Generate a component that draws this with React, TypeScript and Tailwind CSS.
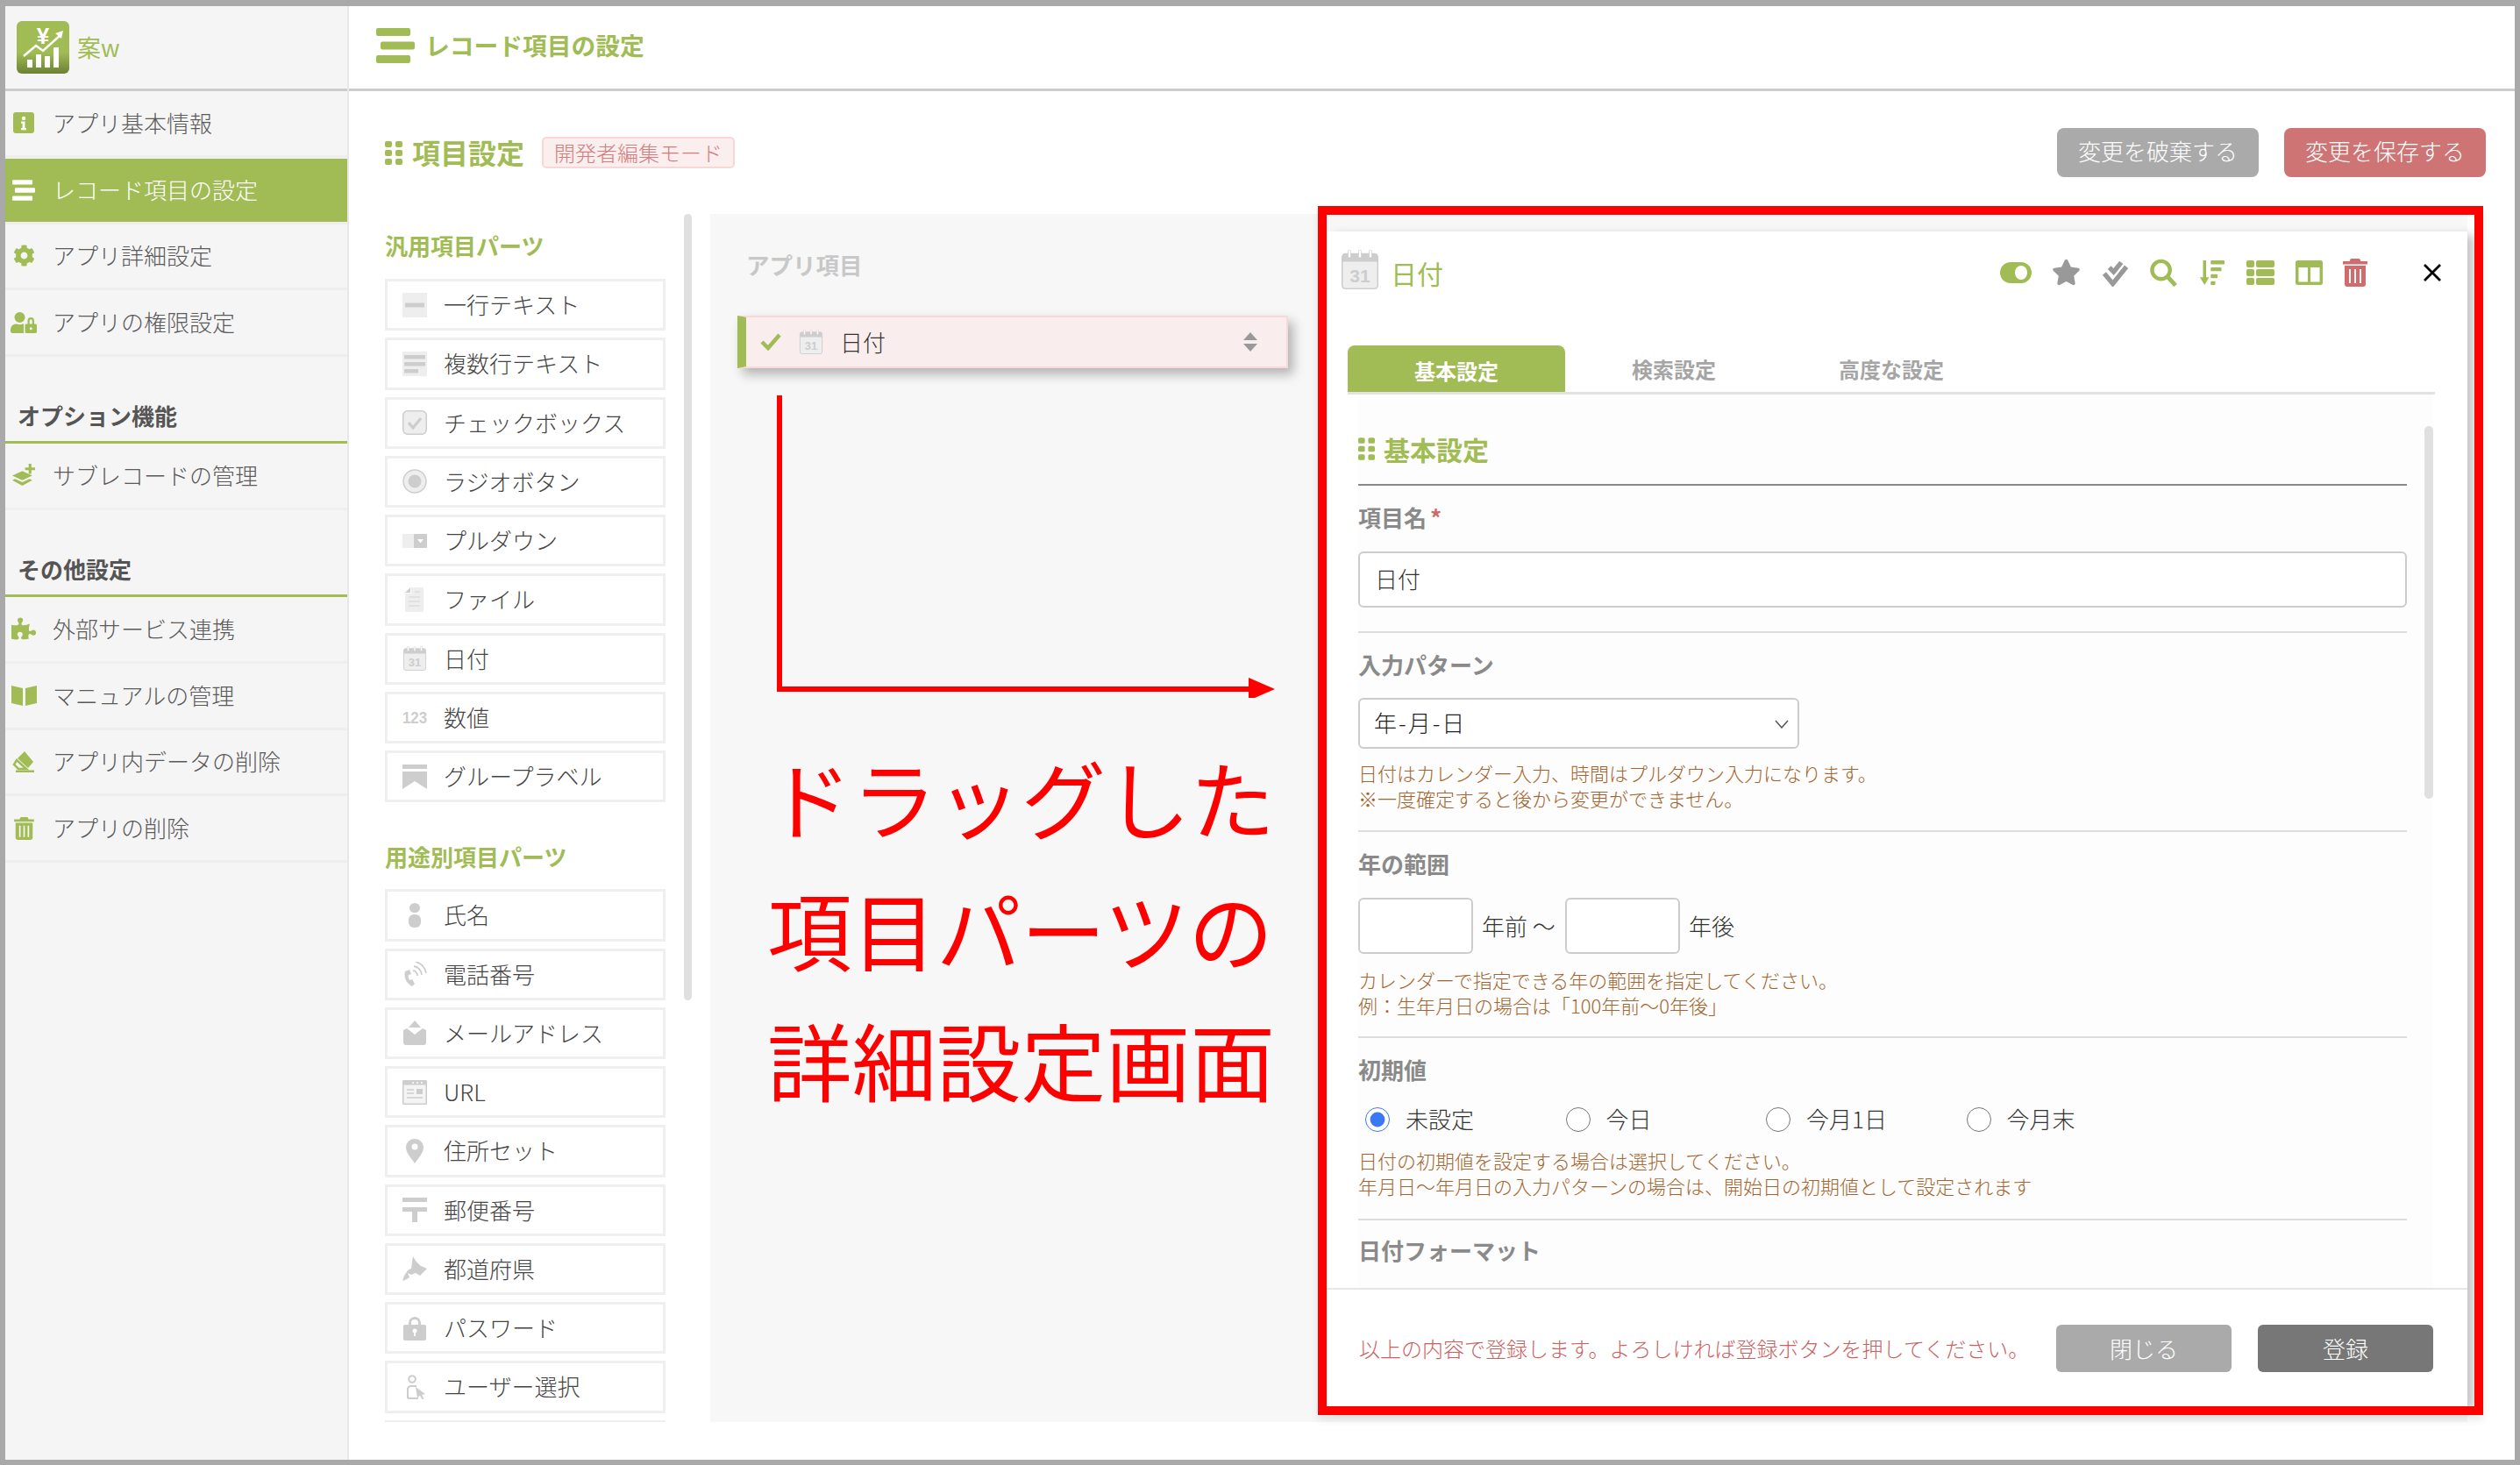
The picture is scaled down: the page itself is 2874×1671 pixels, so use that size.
import type { ReactNode } from 'react';
import { FaCog, FaPuzzlePiece, FaStar, FaUserLock } from 'react-icons/fa';

const GREEN = '#a1bc55';
const GRAY = '#cdcdcd';
const PALE = '#eeeeee';

function MenuIcon({ color = GREEN, className = '' }: { color?: string; className?: string }) {
  return (
    <svg viewBox="0 0 44 40" className={className} fill={color}>
      <rect x="0" y="0" width="39" height="9" rx="2" />
      <rect x="5" y="15.5" width="39" height="9" rx="2" />
      <rect x="0" y="31" width="39" height="9" rx="2" />
    </svg>
  );
}

function DotsIcon({ className = '' }: { className?: string }) {
  return (
    <svg viewBox="0 0 20 27" className={className} fill={GREEN}>
      <rect x="0" y="0" width="8" height="7" rx="2" />
      <rect x="12" y="0" width="8" height="7" rx="2" />
      <rect x="0" y="10" width="8" height="7" rx="2" />
      <rect x="12" y="10" width="8" height="7" rx="2" />
      <rect x="0" y="20" width="8" height="7" rx="2" />
      <rect x="12" y="20" width="8" height="7" rx="2" />
    </svg>
  );
}

function CalendarIcon({ className = '' }: { className?: string }) {
  return (
    <svg viewBox="0 0 28 30" className={className}>
      <rect x="0.5" y="3" width="27" height="26.5" rx="2.5" fill={PALE} stroke={GRAY} />
      <path d="M0.5 5.5a2.5 2.5 0 0 1 2.5-2.5h22a2.5 2.5 0 0 1 2.5 2.5V9H0.5z" fill={GRAY} />
      <rect x="5" y="0" width="2" height="6" rx="1" fill="#ffffff" stroke={GRAY} strokeWidth="0.5" />
      <rect x="13" y="0" width="2" height="6" rx="1" fill="#ffffff" stroke={GRAY} strokeWidth="0.5" />
      <rect x="21" y="0" width="2" height="6" rx="1" fill="#ffffff" stroke={GRAY} strokeWidth="0.5" />
      <text x="14" y="24.5" textAnchor="middle" fontSize="14" fontWeight="700" fill={GRAY} fontFamily="Liberation Sans, sans-serif">
        31
      </text>
    </svg>
  );
}

function TrashIcon({ color = GREEN, className = '' }: { color?: string; className?: string }) {
  return (
    <svg viewBox="0 0 28 32" className={className} fill={color}>
      <path d="M10 0h8a2 2 0 0 1 2 2v1h8v3.5H0V3h8V2a2 2 0 0 1 2-2z" />
      <path d="M2 8h24v21a3 3 0 0 1-3 3H5a3 3 0 0 1-3-3z" />
      <rect x="7" y="12" width="2" height="16" fill="#ffffff" />
      <rect x="13" y="12" width="2" height="16" fill="#ffffff" />
      <rect x="19" y="12" width="2" height="16" fill="#ffffff" />
    </svg>
  );
}

function InfoIcon() {
  return (
    <svg viewBox="0 0 24 24" className="h-[24px] w-[24px]">
      <rect width="24" height="24" rx="3" fill={GREEN} />
      <circle cx="12" cy="7" r="2.2" fill="#ffffff" />
      <path d="M9 10.5h4.5V18H15v2.2H9V18h1.6v-5.3H9z" fill="#ffffff" />
    </svg>
  );
}

function SubRecordIcon() {
  return (
    <svg viewBox="0 0 26 26" className="h-[27px] w-[27px]" fill={GREEN}>
      <path d="M18 0h3v4h4v3h-4v4h-3V7h-4V4h4z" />
      <path d="M0 13l11-5 11 5-11 5z" />
      <path d="M0 18l3-1.500 8 3.700 8-3.700 3 1.500-11 6z" />
    </svg>
  );
}

function BookIcon() {
  return (
    <svg viewBox="0 0 29 24" className="h-[24px] w-[29px]" fill={GREEN}>
      <path d="M0 1l13 3v20L0 21z" />
      <path d="M29 1l-13 3v20l13-3z" />
    </svg>
  );
}

function EraserIcon() {
  return (
    <svg viewBox="0 0 26 24" className="h-[24px] w-[26px]" fill={GREEN}>
      <path d="M14 0l10 12-6 7-12-11z" />
      <path d="M5 10l11 10H7l-5-5z" fill="none" stroke={GREEN} strokeWidth="2.500" />
      <rect x="4" y="21.500" width="21" height="2.500" />
    </svg>
  );
}

const fullBox = 'h-[28px] w-[28px]';

function PartIcon({ kind }: { kind: string }) {
  switch (kind) {
    case 'line':
      return (
        <svg viewBox="0 0 28 28" className={fullBox}>
          <rect width="28" height="28" fill={PALE} />
          <rect x="3" y="11.5" width="22" height="5" fill={GRAY} />
        </svg>
      );
    case 'multi':
      return (
        <svg viewBox="0 0 28 28" className={fullBox}>
          <rect width="28" height="28" fill={PALE} />
          <rect x="2" y="4" width="24" height="4.5" fill={GRAY} />
          <rect x="2" y="12" width="24" height="4.5" fill={GRAY} />
          <rect x="2" y="20" width="16" height="4.5" fill={GRAY} />
        </svg>
      );
    case 'check':
      return (
        <svg viewBox="0 0 28 28" className={fullBox}>
          <rect x="0.75" y="0.75" width="26.5" height="26.5" rx="5" fill={PALE} stroke={GRAY} strokeWidth="1.5" />
          <path d="M7 14l5 6 9-11" fill="none" stroke={GRAY} strokeWidth="3.2" />
        </svg>
      );
    case 'radio':
      return (
        <svg viewBox="0 0 28 28" className={fullBox}>
          <circle cx="14" cy="14" r="13" fill={PALE} stroke={GRAY} strokeWidth="1.5" />
          <circle cx="14" cy="14" r="7.5" fill={GRAY} />
        </svg>
      );
    case 'select':
      return (
        <svg viewBox="0 0 28 28" className={fullBox}>
          <rect x="0" y="6" width="28" height="16" fill={PALE} />
          <rect x="13" y="6" width="15" height="16" fill={GRAY} />
          <path d="M17 12h7l-3.500 4.500z" fill="#ffffff" />
        </svg>
      );
    case 'file':
      return (
        <svg viewBox="0 0 28 28" className={fullBox}>
          <path d="M10 0h14v28H3V7h7z" fill={PALE} />
          <path d="M9 0v6H3z" fill={GRAY} />
          <path d="M7 11h13M7 16h13M7 21h13M14 5h6" stroke="#dddddd" strokeWidth="1.5" />
        </svg>
      );
    case 'date':
      return <CalendarIcon className={fullBox} />;
    case 'number':
      return (
        <svg viewBox="0 0 28 28" className={`${fullBox} overflow-visible`}>
          <text x="14" y="21" textAnchor="middle" fontSize="19" textLength="28" lengthAdjust="spacingAndGlyphs" fontWeight="700" fill={GRAY} fontFamily="Liberation Sans, sans-serif">
            123
          </text>
        </svg>
      );
    case 'group':
      return (
        <svg viewBox="0 0 28 28" className={fullBox} fill={GRAY}>
          <rect width="28" height="5" />
          <path d="M0 8h28v20l-14-9-14 9z" />
        </svg>
      );
    case 'person':
      return (
        <svg viewBox="0 0 28 28" className={fullBox} fill={GRAY}>
          <ellipse cx="14" cy="5.500" rx="6" ry="5.500" />
          <rect x="7" y="13" width="14" height="15" rx="6" />
        </svg>
      );
    case 'phone':
      return (
        <svg viewBox="0 0 28 28" className={fullBox}>
          <path d="M3 11c-2 7 2 14 8 17l3-3-3-5-3 1c-1-2-2-4-1-6l3-1-2-5z" fill={GRAY} />
          <path d="M12 10a6 6 0 0 1 5 6M13 5a11 11 0 0 1 9 10M15 0a16 16 0 0 1 12 13" fill="none" stroke={GRAY} strokeWidth="1.800" />
        </svg>
      );
    case 'mail':
      return (
        <svg viewBox="0 0 28 28" className={fullBox} fill={GRAY}>
          <path d="M14 0l7 8H7z" />
          <path d="M1 11l4-2 9 7 9-7 4 2v14a3 3 0 0 1-3 3H4a3 3 0 0 1-3-3z" />
        </svg>
      );
    case 'url':
      return (
        <svg viewBox="0 0 28 28" className={fullBox}>
          <rect width="28" height="28" rx="1.500" fill={GRAY} />
          <rect x="1.500" y="5.500" width="25" height="21" fill="#f4f4f4" />
          <circle cx="12" cy="3" r="1" fill="#ffffff" />
          <circle cx="17" cy="3" r="1" fill="#ffffff" />
          <circle cx="22" cy="3" r="1" fill="#ffffff" />
          <path d="M5 11h8M5 15h8M5 20h18" stroke={GRAY} strokeWidth="1.500" />
          <rect x="16" y="10" width="7" height="6" fill={GRAY} />
        </svg>
      );
    case 'pin':
      return (
        <svg viewBox="0 0 28 28" className={fullBox}>
          <path d="M14 0c6 0 10 4.500 10 10 0 6-6 12-10 18C10 22 4 16 4 10 4 4.500 8 0 14 0z" fill={GRAY} />
          <ellipse cx="14" cy="9" rx="3.500" ry="3.500" fill="#ffffff" />
        </svg>
      );
    case 'post':
      return (
        <svg viewBox="0 0 28 28" className={fullBox} fill={GRAY}>
          <rect width="28" height="5" />
          <rect y="11" width="28" height="5" />
          <rect x="11" y="11" width="6" height="17" />
        </svg>
      );
    case 'pref':
      return (
        <svg viewBox="0 0 28 28" className={fullBox} fill={GRAY}>
          <path d="M12 0c2 4 5 8 9 11l7 3-4 4-4 4-5-3-5 2-4-2 2 5-5 3-3 1 2-6 4-6 4-2 1-8z" />
        </svg>
      );
    case 'lock':
      return (
        <svg viewBox="0 0 28 28" className={fullBox}>
          <path d="M7 11V8a7 7 0 0 1 14 0v3h-3V8a4 4 0 0 0-8 0v3z" fill={GRAY} />
          <rect x="1" y="10" width="26" height="18" rx="2" fill={GRAY} />
          <circle cx="14" cy="17" r="2.500" fill="#ffffff" />
          <rect x="13" y="17" width="2" height="6" fill="#ffffff" />
        </svg>
      );
    case 'user':
      return (
        <svg viewBox="0 0 28 28" className={fullBox}>
          <circle cx="11" cy="5" r="3.800" fill="none" stroke={GRAY} strokeWidth="2" />
          <path d="M16 13h-7a4 4 0 0 0-3 4v9a1 1 0 0 0 1 1h11" fill="none" stroke={GRAY} strokeWidth="2" />
          <path d="M15 14l11 8-4 1 2.500 5-2 .5-2.500-5-3 3z" fill={GRAY} />
        </svg>
      );
    default:
      return <span className="block h-[28px] w-[28px]" />;
  }
}

function NavItem({ icon, label, active = false }: { icon: ReactNode; label: string; active?: boolean }) {
  return (
    <div
      className={`flex h-[75.75px] items-center border-b-[3px] border-[#eeeeee] ${
        active ? 'border-t-[1px] border-t-[#f6f5f6] bg-[#a1bc55] text-white' : 'text-[#5a5a5a]'
      }`}
    >
      <span className="flex w-[42px] shrink-0 justify-center">{icon}</span>
      <span className="ml-[12px] pb-[2px]">{label}</span>
    </div>
  );
}

function SideHeading({ label, h }: { label: string; h: string }) {
  return (
    <div className={`flex items-end border-b-[3px] border-[#a1bc55] pb-[11px] pl-[14px] font-bold leading-[36px] text-[#555555] ${h}`}>
      {label}
    </div>
  );
}

function Part({ kind, label }: { kind: string; label: string }) {
  return (
    <div className="mb-[8px] flex h-[59.25px] items-center border-[3px] border-[#efefef] bg-white pl-[17px] text-[#444444]">
      <PartIcon kind={kind} />
      <span className="ml-[19px] pb-[2px]">{label}</span>
    </div>
  );
}

function Field({ label, required = false, pb, children }: { label: string; required?: boolean; pb: string; children: ReactNode }) {
  return (
    <div className={`border-b-[2px] border-[#dddddd] pt-[18px] ${pb}`}>
      <div className="font-bold leading-[36px] text-[#8a8a8a]">
        {label}
        {required && <span className="ml-[4px] text-[#d06a6a]">*</span>}
      </div>
      {children}
    </div>
  );
}

function Help({ lines }: { lines: string[] }) {
  return (
    <div className="text-[22px] leading-[29px] text-[#a5642d]">
      {lines.map((l) => (
        <div key={l}>{l}</div>
      ))}
    </div>
  );
}

function Radio({ label, checked = false }: { label: string; checked?: boolean }) {
  return (
    <label className="flex h-[36px] w-[228.500px] items-center text-[#333333]">
      <input type="radio" name="initial" defaultChecked={checked} className="ml-[8px] h-[28px] w-[28px] accent-[#3b78f6]" />
      <span className="mb-[4px] ml-[18px]">{label}</span>
    </label>
  );
}

const generalParts = [
  ['line', '一行テキスト'],
  ['multi', '複数行テキスト'],
  ['check', 'チェックボックス'],
  ['radio', 'ラジオボタン'],
  ['select', 'プルダウン'],
  ['file', 'ファイル'],
  ['date', '日付'],
  ['number', '数値'],
  ['group', 'グループラベル'],
];

const usageParts = [
  ['person', '氏名'],
  ['phone', '電話番号'],
  ['mail', 'メールアドレス'],
  ['url', 'URL'],
  ['pin', '住所セット'],
  ['post', '郵便番号'],
  ['pref', '都道府県'],
  ['lock', 'パスワード'],
  ['user', 'ユーザー選択'],
  ['', ''],
];

export default function App() {
  return (
    <div className="relative h-[1671px] w-full overflow-hidden bg-[#a9a9a9] pb-[6px] pl-[6px] pr-[6px] pt-[7px] font-['Noto_Sans_CJK_JP','Noto_Sans',sans-serif] text-[26px] font-light">
      <div className="flex h-full bg-white">
        {/* sidebar */}
        <aside className="h-full w-[392px] shrink-0 border-r-[2px] border-[#e8e8e8] bg-[#f6f5f6]">
          <div className="flex h-[97px] items-center border-b-[3px] border-[#cccccc] pl-[13px]">
            <div className="h-[60px] w-[60px] overflow-hidden rounded-[6px] bg-gradient-to-b from-[#a1bc55] from-60% to-[#6b8232]">
              <svg viewBox="0 0 60 60">
                <text x="30" y="26" textAnchor="middle" fontSize="26" fontWeight="700" fill="#ffffff" fontFamily="Liberation Sans, sans-serif">
                  ¥
                </text>
                <path d="M8 40l14-12 8 6 20-18" fill="none" stroke="#ffffff" strokeWidth="2.500" />
                <path d="M44 14l9-3-2 9z" fill="#ffffff" />
                <rect x="12" y="44" width="6" height="9" fill="#ffffff" />
                <rect x="22" y="38" width="6" height="15" fill="#ffffff" />
                <rect x="32" y="40" width="6" height="13" fill="#ffffff" />
                <rect x="42" y="30" width="6" height="23" fill="#ffffff" />
              </svg>
            </div>
            <span className="ml-[9px] text-[27px] font-normal text-[#a1bc55]">案w</span>
          </div>
          <NavItem icon={<InfoIcon />} label="アプリ基本情報" />
          <NavItem active icon={<MenuIcon color="#ffffff" className="h-[24px] w-[26px]" />} label="レコード項目の設定" />
          <NavItem icon={<FaCog size={25} color={GREEN} />} label="アプリ詳細設定" />
          <NavItem icon={<FaUserLock size={30} color={GREEN} />} label="アプリの権限設定" />
          <SideHeading label="オプション機能" h="h-[99px]" />
          <NavItem icon={<SubRecordIcon />} label="サブレコードの管理" />
          <SideHeading label="その他設定" h="h-[99.250px]" />
          <NavItem icon={<FaPuzzlePiece size={28} color={GREEN} />} label="外部サービス連携" />
          <NavItem icon={<BookIcon />} label="マニュアルの管理" />
          <NavItem icon={<EraserIcon />} label="アプリ内データの削除" />
          <NavItem icon={<TrashIcon className="h-[26px] w-[23px]" />} label="アプリの削除" />
        </aside>

        {/* main */}
        <main className="min-w-0 flex-1">
          <header className="flex h-[97px] items-center border-b-[3px] border-[#cccccc] pb-[4px] pl-[31px]">
            <MenuIcon className="h-[40px] w-[44px]" />
            <span className="ml-[12px] text-[27.750px] font-bold text-[#a1bc55]">レコード項目の設定</span>
          </header>

          <div className="mb-[42px] mt-[42px] flex h-[56px] items-center pl-[41px] pr-[33px]">
            <DotsIcon className="h-[27px] w-[20px]" />
            <span className="mb-[2px] ml-[11px] text-[32px] font-bold text-[#a1bc55]">項目設定</span>
            <span className="ml-[20px] flex h-[36px] w-[220px] items-center justify-center rounded-[5px] border-[2px] border-[#f8d7d7] bg-[#fbeeee] pb-[1px] text-[24px] text-[#d27d7d]">
              開発者編集モード
            </span>
            <button type="button" className="ml-auto h-[56px] w-[230px] rounded-[8px] bg-[#aaaaaa] pb-[5px] text-white">
              変更を破棄する
            </button>
            <button type="button" className="ml-[29px] h-[56px] w-[230px] rounded-[8px] bg-[#ce7474] pb-[5px] text-white">
              変更を保存する
            </button>
          </div>

          <div className="flex h-[1378px] pl-[41px] pr-[54px]">
            {/* parts palette */}
            <div className="w-[320px] shrink-0 overflow-hidden">
              <div className="mb-[20px] mt-[18px] font-bold leading-[36px] text-[#a1bc55]">汎用項目パーツ</div>
              {generalParts.map(([k, l]) => (
                <Part key={l} kind={k} label={l} />
              ))}
              <div className="mb-[19px] mt-[44px] font-bold leading-[36px] text-[#a1bc55]">用途別項目パーツ</div>
              {usageParts.map(([k, l]) => (
                <Part key={l} kind={k} label={l} />
              ))}
            </div>
            <div className="ml-[21px] h-[897px] w-[9px] shrink-0 rounded-full bg-[#e0e0e0]" />

            {/* app items */}
            <section className="relative ml-[21px] flex-1 bg-[#f7f7f7] pl-[31px]">
              <div className="mb-[40px] ml-[10px] pt-[40px] text-[26.500px] font-bold leading-[36px] text-[#c8c8c8]">アプリ項目</div>
              <div className="flex h-[60px] w-[628px] items-center border-[2px] border-l-[10px] border-[#f8d8d8] border-l-[#a1bc55] bg-[#faeded] pl-[16px] text-[#333333] shadow-[6px_7px_12px_rgba(0,0,0,0.28)]">
                <svg viewBox="0 0 24 20" className="h-[20px] w-[24px]">
                  <path d="M2 10l7 7L22 2" fill="none" stroke={GREEN} strokeWidth="4.500" />
                </svg>
                <CalendarIcon className="ml-[20px] h-[28px] w-[28px]" />
                <span className="ml-[19px] pb-[2px]">日付</span>
                <svg viewBox="0 0 16 22" className="ml-auto mr-[33px] h-[22px] w-[16px]" fill="#999999">
                  <path d="M8 0l8 9H0z" />
                  <path d="M0 13h16l-8 9z" />
                </svg>
              </div>

              {/* detail modal */}
              <div className="absolute bottom-[18px] left-[703px] right-0 top-[20px] flex flex-col bg-white shadow-[8px_4px_10px_rgba(0,0,0,0.22)]">
                <div className="flex h-[130px] shrink-0 items-start pl-[17px] pt-[21px]">
                  <CalendarIcon className="h-[45px] w-[42px]" />
                  <span className="ml-[14px] mt-[3px] text-[30px] font-normal leading-[46px] text-[#a1bc55]">日付</span>
                  <div className="ml-[635px] mt-[9px] flex items-center">
                    <svg viewBox="0 0 36 24" className="h-[24px] w-[36px]">
                      <rect width="36" height="24" rx="12" fill={GREEN} />
                      <ellipse cx="24" cy="12" rx="7" ry="8" fill="#ffffff" />
                    </svg>
                    <FaStar size={33} color="#999999" className="ml-[23px]" />
                    <svg viewBox="0 0 32 32" className="ml-[24px] h-[32px] w-[31px]" fill="none" stroke="#999999" strokeWidth="5.500">
                      <path d="M9 10l5 5 9-11" />
                      <path d="M3 17l10 12 16-20" />
                    </svg>
                    <svg viewBox="0 0 32 32" className="ml-[24px] h-[32px] w-[31px]" fill="none" stroke={GREEN}>
                      <circle cx="13" cy="13" r="10.500" strokeWidth="4.500" />
                      <path d="M21 21l9 10" strokeWidth="5" />
                    </svg>
                    <svg viewBox="0 0 32 32" className="ml-[24px] h-[28px] w-[32px]" fill={GREEN}>
                      <rect x="4" y="0" width="4" height="25" />
                      <path d="M0 22h12l-6 10z" />
                      <rect x="14" y="0" width="18" height="5" rx="1" />
                      <rect x="14" y="9" width="14" height="5" rx="1" />
                      <rect x="14" y="18" width="9" height="5" rx="1" />
                      <rect x="14" y="27" width="6" height="5" rx="1" />
                    </svg>
                    <svg viewBox="0 0 32 28" className="ml-[23px] h-[28px] w-[32px]" fill={GREEN}>
                      <rect width="9" height="8" rx="2" />
                      <rect x="11" width="21" height="8" rx="2" />
                      <rect y="10" width="9" height="8" rx="2" />
                      <rect x="11" y="10" width="21" height="8" rx="2" />
                      <rect y="20" width="9" height="8" rx="2" />
                      <rect x="11" y="20" width="21" height="8" rx="2" />
                    </svg>
                    <svg viewBox="0 0 31 28" className="ml-[24px] h-[28px] w-[31px]">
                      <rect width="31" height="28" rx="2.500" fill={GREEN} />
                      <rect x="3.500" y="8" width="10.500" height="16.500" fill="#ffffff" />
                      <rect x="17" y="8" width="10.500" height="16.500" fill="#ffffff" />
                    </svg>
                    <TrashIcon color="#d26c6c" className="ml-[23px] h-[32px] w-[28px]" />
                    <svg viewBox="0 0 22 22" className="ml-[63px] h-[22px] w-[22px]" fill="none" stroke="#000000" strokeWidth="2.800">
                      <path d="M2 2l18 18M20 2L2 20" />
                    </svg>
                  </div>
                </div>

                {/* tabs */}
                <div className="ml-[24px] mr-[37px] flex h-[56px] shrink-0 border-b-[3px] border-[#e2e2e2] text-[24px] font-bold text-[#a5a5a5]">
                  <div className="flex w-[248px] items-center justify-center rounded-t-[8px] bg-[#a1bc55] pt-[4px] text-white">基本設定</div>
                  <div className="flex w-[248px] items-center justify-center">検索設定</div>
                  <div className="flex w-[248px] items-center justify-center">高度な設定</div>
                </div>

                {/* form */}
                <div className="relative ml-[36px] mr-[39px] min-h-0 flex-1 overflow-hidden bg-[#fcfdfc] pr-[30px]">
                  <div className="absolute right-0 top-[36px] h-[425px] w-[10px] rounded-full bg-[#e0e0e0]" />
                  <div className="flex h-[104px] items-center border-b-[2.500px] border-[#888888] pt-[22px]">
                    <DotsIcon className="h-[26px] w-[19px]" />
                    <span className="ml-[10px] text-[30px] font-bold text-[#a1bc55]">基本設定</span>
                  </div>

                  <Field label="項目名" required pb="pb-[27px]">
                    <input
                      defaultValue="日付"
                      className="mt-[21px] h-[64px] w-full rounded-[6px] border-[2px] border-[#cccccc] bg-white pb-[3px] pl-[17px] text-[#333333]"
                    />
                  </Field>

                  <Field label="入力パターン" pb="pb-[22px]">
                    <div className="relative mb-[13px] mt-[20px] w-[503px]">
                      <select className="h-[58px] w-full appearance-none rounded-[6px] border-[2px] border-[#cccccc] bg-white pb-[3px] pl-[16px] tracking-[2px] text-[#222222]">
                        <option>年-月-日</option>
                      </select>
                      <svg viewBox="0 0 16 10" className="absolute right-[12px] top-[25px] h-[10px] w-[16px]" fill="none" stroke="#555555" strokeWidth="1.500">
                        <path d="M1 1l7 8 7-8" />
                      </svg>
                    </div>
                    <Help lines={['日付はカレンダー入力、時間はプルダウン入力になります。', '※一度確定すると後から変更ができません。']} />
                  </Field>

                  <Field label="年の範囲" pb="pb-[21px]">
                    <div className="mb-[15px] mt-[21px] flex items-center text-[#333333]">
                      <input className="h-[64px] w-[131px] rounded-[6px] border-[2px] border-[#cccccc] bg-white" />
                      <span className="mb-[2px] ml-[10px] w-[95px]">年前 〜</span>
                      <input className="h-[64px] w-[131px] rounded-[6px] border-[2px] border-[#cccccc] bg-white" />
                      <span className="mb-[2px] ml-[10px]">年後</span>
                    </div>
                    <Help lines={['カレンダーで指定できる年の範囲を指定してください。', '例：生年月日の場合は「100年前〜0年後」']} />
                  </Field>

                  <Field label="初期値" pb="pb-[23px]">
                    <div className="mb-[14px] mt-[21px] flex">
                      <Radio checked label="未設定" />
                      <Radio label="今日" />
                      <Radio label="今月1日" />
                      <Radio label="今月末" />
                    </div>
                    <Help lines={['日付の初期値を設定する場合は選択してください。', '年月日〜年月日の入力パターンの場合は、開始日の初期値として設定されます']} />
                  </Field>

                  <div className="pt-[16px] font-bold leading-[36px] text-[#8a8a8a]">日付フォーマット</div>
                </div>

                {/* footer */}
                <div className="flex h-[135px] shrink-0 items-center border-t-[2px] border-[#e6e6e6] pl-[37px] pr-[39px]">
                  <span className="text-[24px] text-[#cb5f5f]">以上の内容で登録します。よろしければ登録ボタンを押してください。</span>
                  <button type="button" className="ml-auto h-[54px] w-[200px] rounded-[6px] bg-[#aaaaaa] text-white">
                    閉じる
                  </button>
                  <button type="button" className="ml-[30px] h-[54px] w-[200px] rounded-[6px] bg-[#777777] text-white">
                    登録
                  </button>
                </div>
              </div>
            </section>
          </div>
        </main>
      </div>

      {/* annotation overlay */}
      <div className="absolute left-[1503px] top-[235px] h-[1379px] w-[1329px] border-[10px] border-[#ff0000] shadow-[0_6px_8px_rgba(0,0,0,0.08)]" />
      <svg viewBox="0 0 580 345" className="absolute left-[884px] top-[451px] h-[345px] w-[580px]" fill="#ff0000">
        <rect x="2" y="0" width="6" height="338" />
        <rect x="2" y="332" width="550" height="6" />
        <path d="M570 335l-30-13v26z" />
      </svg>
      <div className="absolute left-[875px] top-[834px] whitespace-nowrap text-[96.500px] font-normal leading-[149.500px] text-[#ff0000]">
        <div>ドラッグした</div>
        <div>項目パーツの</div>
        <div>詳細設定画面</div>
      </div>
    </div>
  );
}
